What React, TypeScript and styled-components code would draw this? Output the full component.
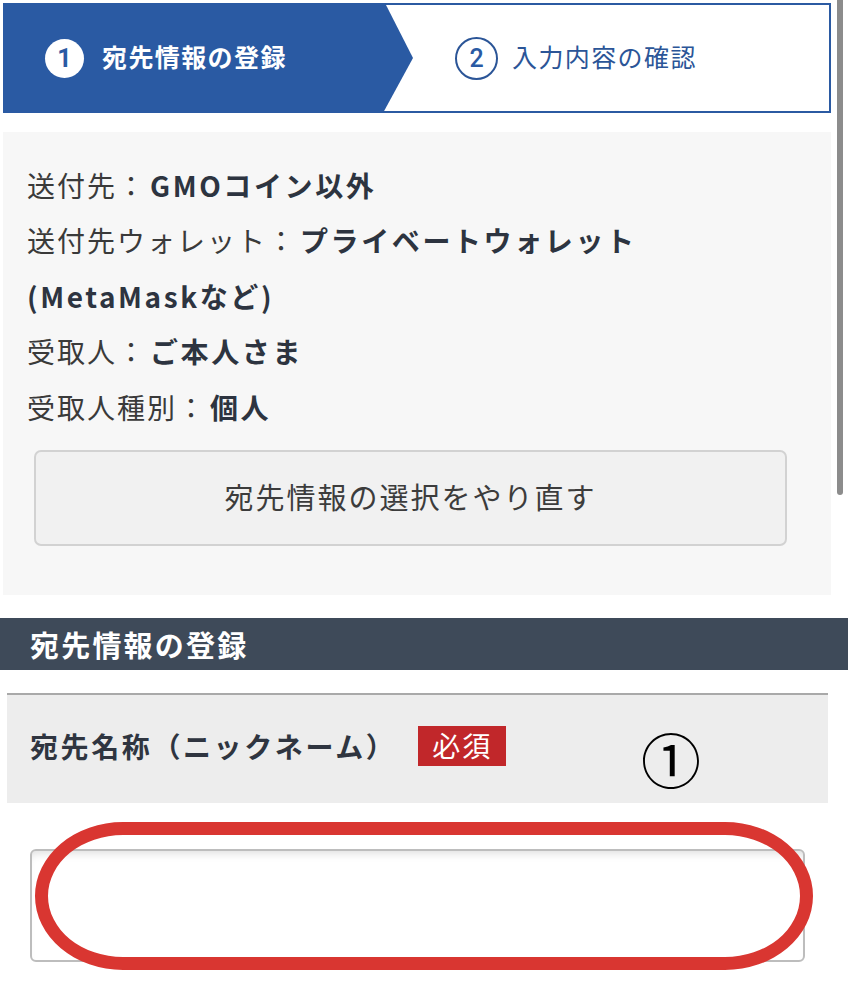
import React from "react";
import styled, { createGlobalStyle } from "styled-components";

const GlobalStyle = createGlobalStyle`
  html, body { margin: 0; padding: 0; background: #ffffff; }
  body { font-family: "Noto Sans CJK JP", "Noto Sans", sans-serif; color: #333; }
  * { box-sizing: border-box; }
`;

const Page = styled.div`
  position: relative;
  width: 848px;
  height: 992px;
  overflow: hidden;
  background: #fff;
`;

const ScrollThumb = styled.div`
  position: absolute;
  top: 0;
  left: 837px;
  width: 6px;
  height: 495px;
  background: #8c8c8c;
  border-radius: 0 0 3px 3px;
`;

const Stepper = styled.div`
  display: flex;
  margin: 3px 17px 0 3px;
  height: 110px;
  border: 2px solid #2b5aa2;
  background: #fff;
`;

const StepActive = styled.div`
  display: flex;
  align-items: center;
  gap: 18px;
  width: 410px;
  flex-shrink: 0;
  margin: -2px 0 -2px -2px;
  padding-left: 42px;
  background: #2a5aa3;
  clip-path: polygon(0 0, 382px 0, 100% 50%, 380px 100%, 0 100%);
`;

const StepNext = styled.div`
  display: flex;
  align-items: center;
  gap: 14px;
  padding-left: 42px;
`;

const StepNum = styled.span<{ $active?: boolean }>`
  display: inline-flex;
  align-items: center;
  justify-content: center;
  width: ${(p) => (p.$active ? "39px" : "43px")};
  height: ${(p) => (p.$active ? "39px" : "43px")};
  border-radius: 50%;
  background: ${(p) => (p.$active ? "#fff" : "transparent")};
  border: ${(p) => (p.$active ? "none" : "2.5px solid #2b5597")};
  color: #2a5aa3;
  font-family: "Roboto", "Noto Sans", sans-serif;
  font-weight: ${(p) => (p.$active ? 700 : 500)};
  font-size: ${(p) => (p.$active ? "25px" : "25px")};
  line-height: 1;
`;

const StepLabel = styled.span<{ $active?: boolean }>`
  font-size: 25px;
  letter-spacing: 1.4px;
  font-weight: ${(p) => (p.$active ? 700 : 400)};
  color: ${(p) => (p.$active ? "#ffffff" : "#2b5597")};
  margin-top: -4px;
`;

const InfoPanel = styled.div`
  margin: 19px 17px 0 3px;
  padding: 25px 47px 49px 24px;
  background: #f7f7f7;
`;

const InfoLine = styled.div`
  height: 55.5px;
  display: flex;
  align-items: center;
  font-size: 28px;
  letter-spacing: 2px;
  color: #3a3a3a;
  white-space: nowrap;
`;

const InfoValue = styled.span<{ $latin?: boolean }>`
  font-weight: 700;
  color: #2d3440;
  letter-spacing: ${(p) => (p.$latin ? "2.6px" : "2.6px")};
  margin-left: 3px;
`;

const RedoButton = styled.button`
  display: flex;
  align-items: center;
  justify-content: center;
  width: 753px;
  height: 96px;
  margin: 15px 0 0 7px;
  background: #f1f1f1;
  border: 2px solid #d2d2d2;
  border-radius: 7px;
  font-family: "Noto Sans CJK JP", sans-serif;
  font-size: 29px;
  letter-spacing: 2px;
  color: #3c3c3c;
  padding: 0 0 4px 0;
`;

const SectionHeader = styled.div`
  margin-top: 23px;
  height: 52px;
  display: flex;
  align-items: center;
  padding-left: 30px;
  background: #3e4a59;
  color: #fff;
  font-size: 29px;
  font-weight: 700;
  letter-spacing: 2.2px;
`;

const FieldHead = styled.div`
  position: relative;
  margin: 23px 20px 0 7px;
  height: 110px;
  border-top: 2px solid #a9a9a9;
  background: #ededed;
  display: flex;
  align-items: center;
  gap: 22px;
  padding: 0 0 6px 23px;
`;

const FieldLabel = styled.span`
  font-size: 28px;
  font-weight: 700;
  color: #2f3540;
  letter-spacing: 2.6px;
`;

const RequiredBadge = styled.span`
  display: inline-flex;
  align-items: center;
  justify-content: center;
  width: 88px;
  height: 40px;
  background: #c1272a;
  color: #fff;
  font-size: 28px;
  letter-spacing: 2px;
  padding-bottom: 2px;
`;

const Annotation = styled.span`
  position: absolute;
  left: 634px;
  top: 33px;
  font-size: 60px;
  line-height: 1;
  color: #000;
  font-family: "Noto Sans CJK JP", sans-serif;
`;

const InputWrap = styled.div`
  position: relative;
  margin: 46px 0 0 30px;
  width: 775px;
`;

const TextInput = styled.input`
  display: block;
  width: 100%;
  height: 113px;
  border: 2px solid #bdbdbd;
  border-radius: 6px;
  background: #fff;
  box-shadow: inset 0 8px 10px -6px rgba(0, 0, 0, 0.14);
  outline: none;
`;

const Highlight = styled.div`
  position: absolute;
  left: 5px;
  top: -27px;
  width: 778px;
  height: 148px;
  border: 13px solid #d93631;
  border-radius: 88px / 74px;
  pointer-events: none;
`;

export default function App() {
  return (
    <Page>
      <GlobalStyle />
      <Stepper>
        <StepActive>
          <StepNum $active>1</StepNum>
          <StepLabel $active>宛先情報の登録</StepLabel>
        </StepActive>
        <StepNext>
          <StepNum>2</StepNum>
          <StepLabel>入力内容の確認</StepLabel>
        </StepNext>
      </Stepper>

      <InfoPanel>
        <InfoLine>
          送付先：<InfoValue>GMOコイン以外</InfoValue>
        </InfoLine>
        <InfoLine>
          送付先ウォレット：<InfoValue>プライベートウォレット</InfoValue>
        </InfoLine>
        <InfoLine>
          <InfoValue $latin style={{ marginLeft: 0 }}>(MetaMaskなど)</InfoValue>
        </InfoLine>
        <InfoLine>
          受取人：<InfoValue>ご本人さま</InfoValue>
        </InfoLine>
        <InfoLine>
          受取人種別：<InfoValue>個人</InfoValue>
        </InfoLine>
        <RedoButton type="button">宛先情報の選択をやり直す</RedoButton>
      </InfoPanel>

      <SectionHeader>宛先情報の登録</SectionHeader>

      <FieldHead>
        <FieldLabel>宛先名称（ニックネーム）</FieldLabel>
        <RequiredBadge>必須</RequiredBadge>
        <Annotation>①</Annotation>
      </FieldHead>

      <InputWrap>
        <TextInput type="text" aria-label="宛先名称" />
        <Highlight />
      </InputWrap>

      <ScrollThumb />
    </Page>
  );
}
